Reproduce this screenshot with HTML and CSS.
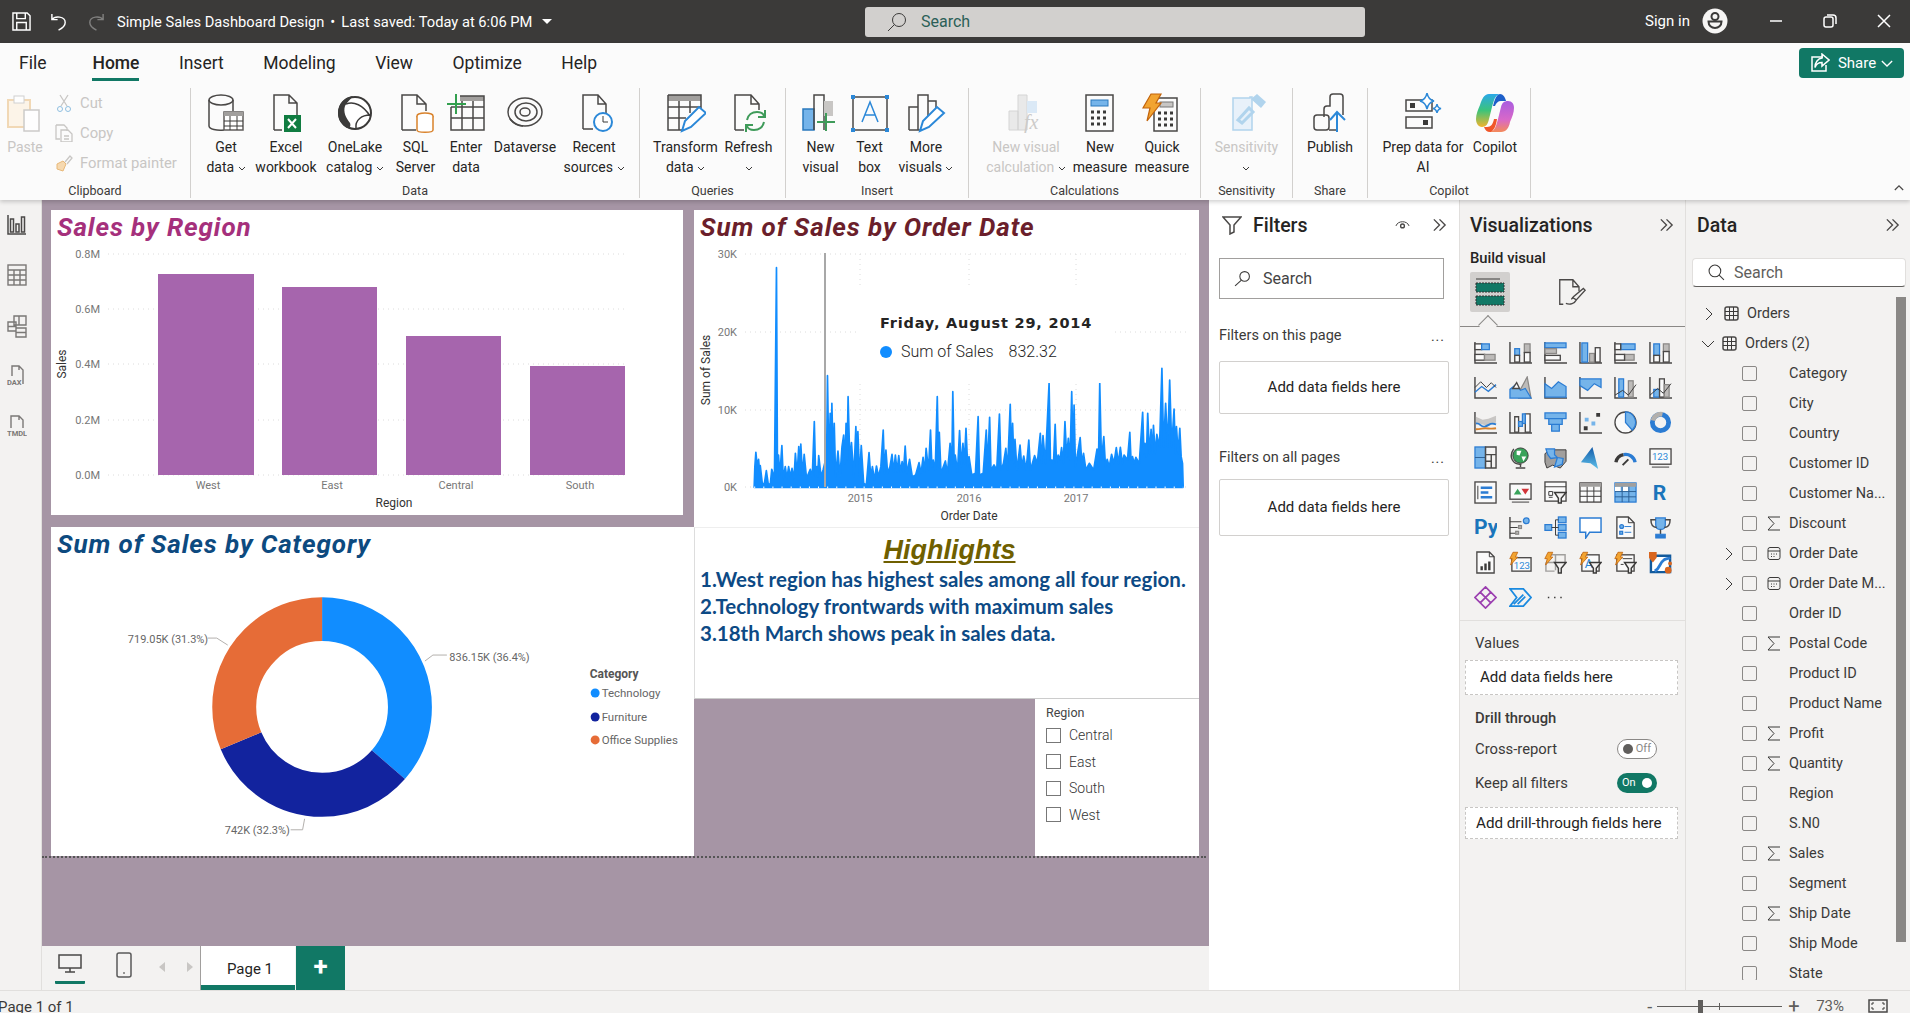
FILE: index.html
```html
<!DOCTYPE html>
<html lang="en">

<head>
    <meta charset="UTF-8">
    <title>Simple Sales Dashboard Design</title>
    <link rel="stylesheet" href="styles.css">
</head>

<body>
    <svg class="defs" width="0" height="0">
        <symbol id="i-sigma" viewBox="0 0 14 15"><path class="k" d="M13 1H1l6 6.500L1 14h12"/></symbol>
        <symbol id="i-cal" viewBox="0 0 14 14"><rect class="k" x="1" y="1" width="12" height="12" rx="2"/><path class="k" d="M1 4.500h12M4 7.500h1M6.500 7.500h1M9 7.500h1M4 10h1M6.500 10h1"/></symbol>
        <symbol id="i-right" viewBox="0 0 8 14"><path class="k" d="M1 1l6 6-6 6"/></symbol>
        <symbol id="i-down" viewBox="0 0 14 8"><path class="k" d="M1 1l6 6 6-6"/></symbol>
        <symbol id="i-table" viewBox="0 0 15 15"><rect class="k2" x="1" y="1" width="13" height="13" rx="2"/><path class="k" d="M5.500 1v13M9.500 1v13M1 5.500h13M1 9.500h13"/></symbol>
        <symbol id="i-dbl" viewBox="0 0 16 14"><path class="k2" d="M2 1l6 6-6 6M8 1l6 6-6 6"/></symbol>
        <symbol id="i-caret" viewBox="0 0 8 5"><path class="k" d="M1 1l3 3 3-3"/></symbol>
        <symbol id="i-bolt" viewBox="0 0 12 18"><path fill="#f2a431" stroke="#c2630b" d="M5 1h6L8 7h3L2 17l2-8H1z"/></symbol>
    </svg>

    <header class="titlebar">
        <div class="tb-left">
            <svg class="tb-icon" viewBox="0 0 20 20"><path class="wh" d="M1 1h15l3 3v15H1zM5 1v6h9V1M5 19v-8h10v8"/></svg>
            <svg class="tb-icon undo" viewBox="0 0 20 20"><path class="wh" d="M2 2v6h6M2 8c3-4 14-4 14 3 0 3-3 6-7 8"/></svg>
            <svg class="tb-icon dim" viewBox="0 0 20 20"><path class="wh" d="M18 2v6h-6M18 8c-3-4-14-4-14 3 0 3 3 6 7 8"/></svg>
            <span class="tb-title">Simple Sales Dashboard Design<span class="tb-dot">•</span>Last saved: Today at 6:06 PM</span>
            <span class="tb-caret"></span>
        </div>
        <div class="tb-search">
            <svg class="tb-search-icon" viewBox="0 0 20 20"><circle class="k" cx="12" cy="8" r="6.500"/><path class="k" d="M7.500 12.500L1 19"/></svg>
            <span>Search</span>
        </div>
        <div class="tb-right">
            <span class="tb-sign">Sign in</span>
            <svg class="tb-avatar" viewBox="0 0 26 26"><circle cx="13" cy="13" r="12.500" fill="#f6f5f4"/><circle class="dk" cx="13" cy="8.500" r="3.500"/><path class="dk" d="M6.500 13.500h13c0 4-3 6.500-6.500 6.500s-6.500-2.500-6.500-6.500z"/></svg>
            <svg class="tb-win" viewBox="0 0 14 14"><path class="wh" d="M1 7h12"/></svg>
            <svg class="tb-win" viewBox="0 0 14 14"><rect class="wh" x="1" y="3" width="9" height="10" rx="2"/><path class="wh" d="M4 1h6c2 0 3 1 3 3v6"/></svg>
            <svg class="tb-win" viewBox="0 0 14 14"><path class="wh" d="M1 1l12 12M13 1L1 13"/></svg>
        </div>
    </header>

    <section class="ribbon">
        <nav class="tabs">
            <span class="tab first">File</span>
            <span class="tab active">Home</span>
            <span class="tab">Insert</span>
            <span class="tab">Modeling</span>
            <span class="tab">View</span>
            <span class="tab">Optimize</span>
            <span class="tab">Help</span>
            <button class="share">
                <svg class="share-icon" viewBox="0 0 20 20"><path class="wh" d="M13 4H2v14h14v-6"/><path class="wh" d="M12 1l7 6-7 6V9.500c-4 0-6 2-7 5 0-5 3-9 7-9.500z"/></svg>
                Share
                <svg class="share-caret" viewBox="0 0 14 8"><path class="wh" d="M1 1l6 6 6-6"/></svg>
            </button>
        </nav>
        <div class="groups">
            <div class="rg g-clip">
                <div class="btns clip">
                    <div class="rb off w50">
                        <svg class="ri" viewBox="0 0 40 40"><path fill="#fdf4e6" stroke="#f0d5ae" stroke-width="2" d="M3 7h22v27H3z"/><rect x="9" y="3" width="10" height="7" fill="#fff" stroke="#ccc"/><rect x="19" y="17" width="15" height="21" fill="#fff" stroke="#c8c6c4" stroke-width="1.500"/></svg>
                        <span>Paste</span>
                    </div>
                    <div class="clip-list">
                        <div class="clip-item"><svg viewBox="0 0 18 18"><path class="ds" d="M5 1l7 11M13 1L6 12"/><circle cx="5" cy="15" r="2.500" fill="none" stroke="#8fbfe0"/><circle cx="13" cy="15" r="2.500" fill="none" stroke="#8fbfe0"/></svg>Cut</div>
                        <div class="clip-item"><svg viewBox="0 0 18 18"><path class="ds" d="M1 1h8l3 3v3M1 1v14h4"/><path class="ds" d="M6 6h7l4 4v8H6z"/><path class="ds" d="M9 12h5M9 15h5"/></svg>Copy</div>
                        <div class="clip-item"><svg viewBox="0 0 18 18"><path fill="#f6d9b0" stroke="#e8b878" d="M2 10l6-3 3 3-3 7-6-2z"/><path class="ds" d="M10 8l5-6 2 2-5 6"/></svg>Format painter</div>
                    </div>
                </div>
                <div class="rg-label">Clipboard</div>
            </div>

            <div class="rg g-data">
                <div class="btns start">
                    <div class="rb w58">
                        <svg class="ri" viewBox="0 0 40 40"><ellipse class="k2" cx="15" cy="7" rx="12" ry="5"/><path class="k2" d="M3 7v26c0 3 8 5 15 4M27 7v11"/><rect fill="#fff" stroke="#605e5c" stroke-width="1.500" x="18" y="19" width="19" height="18"/><path fill="#a19f9d" d="M18 19h19v4H18z"/><path class="k" d="M24 23v14M31 23v14M18 28h19M18 33h19"/></svg>
                        <span>Get<br>data <svg class="cv"><use href="#i-caret"/></svg></span>
                    </div>
                    <div class="rb w62">
                        <svg class="ri" viewBox="0 0 40 40"><path class="k2" d="M8 37V2h15l8 8v12M23 2v8h8M8 37h8"/><rect x="18" y="22" width="17" height="17" fill="#107c41"/><path stroke="#fff" stroke-width="2" d="M22 26l8 9M30 26l-8 9"/></svg>
                        <span>Excel<br>workbook</span>
                    </div>
                    <div class="rb w76">
                        <svg class="ri" viewBox="0 0 40 40"><circle fill="#fff" stroke="#3b3a39" stroke-width="2" cx="20" cy="20" r="16"/><path fill="#3b3a39" d="M18 3c-9 1-15 8-15 17 0 7 4 12 9 15 3 0 4-2 3-5-4-5-7-11-5-17 2-4 5-6 8-10z"/><path fill="none" stroke="#3b3a39" stroke-width="1.500" d="M11 11c8-3 17 1 24 12M21 35c-1-8 6-13 14-13"/></svg>
                        <span>OneLake<br>catalog <svg class="cv"><use href="#i-caret"/></svg></span>
                    </div>
                    <div class="rb w45">
                        <svg class="ri" viewBox="0 0 40 40"><path class="k2" d="M6 37V2h15l9 9v7M21 2v9h9M6 37h14"/><ellipse fill="#fff" stroke="#d9822b" stroke-width="1.500" cx="29" cy="23" rx="8" ry="3"/><path fill="#fff" stroke="#d9822b" stroke-width="1.500" d="M21 23v14c0 3 16 3 16 0V23"/></svg>
                        <span>SQL<br>Server</span>
                    </div>
                    <div class="rb w56">
                        <svg class="ri" viewBox="0 0 40 40"><path fill="#a19f9d" d="M14 3h24v5H14z"/><path class="k2" d="M5 14v23h33V3H14M5 25h33M5 14h33M16 8v29M27 8v29"/><path stroke="#33a04f" stroke-width="2" d="M10 1v20M1 11h19"/></svg>
                        <span>Enter<br>data</span>
                    </div>
                    <div class="rb w62">
                        <svg class="ri" viewBox="0 0 40 40"><ellipse class="k2" cx="20" cy="19" rx="17" ry="14"/><ellipse class="k2" cx="21" cy="19" rx="11" ry="9"/><ellipse class="k2" cx="20" cy="19" rx="5" ry="4"/><path class="k2" d="M5 26c4 5 9 7 13 7"/></svg>
                        <span>Dataverse</span>
                    </div>
                    <div class="rb w76">
                        <svg class="ri" viewBox="0 0 40 40"><path class="k2" d="M9 36V2h15l8 9v9M24 2v9h8M9 36h10"/><circle fill="#fff" stroke="#2b88d8" stroke-width="2" cx="29" cy="29" r="9"/><path class="k" d="M29 23v6h5"/></svg>
                        <span>Recent<br>sources <svg class="cv"><use href="#i-caret"/></svg></span>
                    </div>
                </div>
                <div class="rg-label">Data</div>
            </div>

            <div class="rg g-query">
                <div class="btns start">
                    <div class="rb w69">
                        <svg class="ri" viewBox="0 0 40 40"><path fill="#a19f9d" d="M2 2h33v6H2z"/><path class="k2" d="M2 2h33v19M2 2v35h14M2 14h33M2 25h18M13 8v29M24 8v12"/><path fill="#fff" stroke="#2b88d8" stroke-width="2" d="M16 38l3-10 14-14 7 6-15 14z"/></svg>
                        <span>Transform<br>data <svg class="cv"><use href="#i-caret"/></svg></span>
                    </div>
                    <div class="rb w57">
                        <svg class="ri" viewBox="0 0 40 40"><path class="k2" d="M6 37V2h16l8 9v6M22 2v9h8M6 37h9"/><path fill="none" stroke="#3f9b5a" stroke-width="2" d="M18 27c1-5 5-8 10-8 3 0 6 1 7 4M35 29c-1 5-5 8-10 8-3 0-6-1-7-4M36 17v7h-7M17 39v-7h7"/></svg>
                        <span>Refresh<br><svg class="cv"><use href="#i-caret"/></svg></span>
                    </div>
                </div>
                <div class="rg-label">Queries</div>
            </div>

            <div class="rg g-insert">
                <div class="btns">
                    <div class="rb w48">
                        <svg class="ri" viewBox="0 0 40 40"><rect x="2" y="16" width="11" height="21" fill="#75b4ea" stroke="#2b79bd" stroke-width="1.500"/><path class="k2" d="M13 37V2h10v35"/><path fill="#c8c6c4" d="M23 8h9v15h-9z"/><path stroke="#3f9b5a" stroke-width="2" d="M25 20v18M16 29h18"/></svg>
                        <span>New<br>visual</span>
                    </div>
                    <div class="rb w50">
                        <svg class="ri" viewBox="0 0 40 40"><rect class="k2" x="3" y="4" width="34" height="33"/><path fill="none" stroke="#2b88d8" stroke-width="1.500" d="M12 29l8-20 8 20M15 22h10"/><path fill="#2b88d8" d="M1 2h4v4H1zM35 2h4v4h-4zM1 35h4v4H1zM35 35h4v4h-4z"/></svg>
                        <span>Text<br>box</span>
                    </div>
                    <div class="rb w63">
                        <svg class="ri" viewBox="0 0 40 40"><path class="k2" d="M3 37V14h9M12 37V2h10v22M22 8h8v7M3 37h13"/><path fill="#fff" stroke="#2b88d8" stroke-width="2" d="M14 38l3-10 14-14 7 6-15 14z"/></svg>
                        <span>More<br>visuals <svg class="cv"><use href="#i-caret"/></svg></span>
                    </div>
                </div>
                <div class="rg-label">Insert</div>
            </div>

            <div class="rg g-calc">
                <div class="btns start">
                    <div class="rb off w88">
                        <svg class="ri" viewBox="0 0 40 40"><path fill="#e8e8e8" stroke="#d0d0d0" d="M3 18h9v19H3zM12 2h9v35h-9z"/><path fill="#d8e8f6" d="M21 8h10v12H21z"/><text class="fx" x="18" y="36">fx</text></svg>
                        <span>New visual<br>calculation <svg class="cv"><use href="#i-caret"/></svg></span>
                    </div>
                    <div class="rb w60">
                        <svg class="ri" viewBox="0 0 40 40"><rect class="k2" x="6" y="2" width="27" height="36"/><rect x="11" y="7" width="17" height="6" fill="#75b4ea" stroke="#2b79bd"/><path stroke="#3b3a39" stroke-width="3" stroke-dasharray="3 3" d="M11 19h18M11 25h18M11 31h18"/></svg>
                        <span>New<br>measure</span>
                    </div>
                    <div class="rb w64">
                        <svg class="ri" viewBox="0 0 40 40"><rect class="k2" x="12" y="5" width="23" height="33"/><rect x="18" y="9" width="13" height="5" fill="#c8c6c4" stroke="#777"/><path stroke="#3b3a39" stroke-width="3" stroke-dasharray="3 3" d="M16 20h16M16 26h16M16 32h16"/><path fill="#f2a431" stroke="#c2630b" stroke-width="1.200" d="M9 1h10l-5 9h5L5 28l3-13H1z"/></svg>
                        <span>Quick<br>measure</span>
                    </div>
                </div>
                <div class="rg-label">Calculations</div>
            </div>

            <div class="rg g-sens">
                <div class="btns">
                    <div class="rb off w92">
                        <svg class="ri" viewBox="0 0 40 40"><path fill="#e6f1fa" stroke="#a9d0ec" stroke-width="1.500" d="M6 5h17v-1h2v33H6z"/><path fill="none" stroke="#a9d0ec" stroke-width="3" d="M11 27l11-12 4 4-11 11z"/><path fill="#a9d0ec" d="M24 6l6-5 9 8-5 6z"/></svg>
                        <span>Sensitivity<br><svg class="cv"><use href="#i-caret"/></svg></span>
                    </div>
                </div>
                <div class="rg-label">Sensitivity</div>
            </div>

            <div class="rg g-share">
                <div class="btns">
                    <div class="rb w75">
                        <svg class="ri" viewBox="0 0 40 40"><path class="k2" d="M14 24v-8c0-2 1-3 3-3h3V4c0-2 1-3 3-3h7c2 0 3 1 3 3v18"/><rect class="k2" x="4" y="22" width="15" height="15" rx="3"/><path class="k2" d="M19 37h8"/><path fill="none" stroke="#2b88d8" stroke-width="2" d="M27 39V19M20 27l7-8 8 8"/></svg>
                        <span>Publish</span>
                    </div>
                </div>
                <div class="rg-label">Share</div>
            </div>

            <div class="rg g-copilot">
                <div class="btns">
                    <div class="rb w82">
                        <svg class="ri" viewBox="0 0 40 40"><rect class="k2" x="3" y="7" width="26" height="11"/><rect x="7" y="10" width="5" height="5" fill="#3b3a39"/><rect class="k2" x="3" y="24" width="26" height="11"/><rect x="20" y="27" width="5" height="5" fill="#3b3a39"/><path fill="#fff" stroke="#2b88d8" stroke-width="1.500" d="M24 0c1 5 3 7 7 8-4 1-6 3-7 8-1-5-3-7-7-8 4-1 6-3 7-8z"/><path fill="#fff" stroke="#2b88d8" stroke-width="1.500" d="M34 11c.5 3 1.500 4 4 4.500-2.500.5-3.500 1.500-4 4.500-.5-3-1.500-4-4-4.500 2.500-.5 3.500-1.500 4-4.500z"/></svg>
                        <span>Prep data for<br>AI</span>
                    </div>
                    <div class="rb w62">
                        <svg class="ri" viewBox="0 0 40 40">
                            <defs>
                                <linearGradient id="cp1" x1="0" y1="0" x2="0" y2="1"><stop offset="0" stop-color="#2aa8e8"/><stop offset=".5" stop-color="#3cc47a"/><stop offset="1" stop-color="#f2b32c"/></linearGradient>
                                <linearGradient id="cp2" x1="0" y1="0" x2="0" y2="1"><stop offset="0" stop-color="#a95de0"/><stop offset=".6" stop-color="#d868c8"/><stop offset="1" stop-color="#f48a5a"/></linearGradient>
                            </defs>
                            <path fill="url(#cp1)" d="M14 1h11c-5 1-6 6-8 13l-3 12c-1 5-3 8-7 8-4 0-6-4-6-8 0-5 2-9 4-14C7 6 9 1 14 1z"/>
                            <path fill="url(#cp2)" d="M26 39H15c5-1 6-6 8-13l3-12c1-4 3-6 7-6 4 0 6 3 6 7 0 5-2 9-4 14-1 6-4 10-9 10z"/>
                            <path fill="#1d5fc9" d="M14 1h11c3 0 5 3 6 7h-5c-3 0-5 2-6 5h-2c2-7 3-11 7-12z"/>
                            <path fill="#f0562a" d="M26 39H15c-3 0-5-2-6-5h3c4 0 6-3 7-8h3c-1 7-3 11-6 13z"/>
                        </svg>
                        <span>Copilot</span>
                    </div>
                </div>
                <div class="rg-label">Copilot</div>
            </div>
            <svg class="collapse" viewBox="0 0 12 8"><path class="k2" d="M1 7l5-5 5 5"/></svg>
        </div>
    </section>

    <main class="workspace">
        <aside class="rail">
            <svg class="rail-icon" viewBox="0 0 20 22"><path class="k2" d="M1 1v19h18"/><path class="k2" d="M3.500 5h3v13h-3zM9 10h3v8H9zM14.500 3h3v15h-3z"/></svg>
            <svg class="rail-icon" viewBox="0 0 20 22"><rect class="g1" x="1" y="1" width="18" height="20"/><path class="g1" d="M1 6h18M1 11h18M1 16h18M7 6v15M13 6v15"/></svg>
            <svg class="rail-icon" viewBox="0 0 20 22"><path class="g1" d="M7 1h12v9H7zM12 1v9M1 7h8v9H1zM1 11.500h8M9 13h10v9H9zM9 17.500h10"/></svg>
            <svg class="rail-icon" viewBox="0 0 20 24"><path class="g1" d="M5 12V2h7l4 4v14M12 2v4"/><text class="rail-txt" x="0" y="21">DAX</text></svg>
            <svg class="rail-icon" viewBox="0 0 20 24"><path class="g1" d="M4 14V2h8l4 4v8M12 2v4"/><text class="rail-txt" x="0" y="22">TMDL</text></svg>
        </aside>

        <div class="center">
            <div class="canvas">
                <div class="page">
                    <section class="visual v-region">
                        <h2 class="v-title t-region">Sales by Region</h2>
                        <svg class="chart" viewBox="0 0 632 305">
                            <g class="grid">
                                <path d="M57 44h520M57 99h520M57 154h520M57 210h520M57 265h520"/>
                            </g>
                            <g class="ax">
                                <text x="49" y="48" text-anchor="end">0.8M</text>
                                <text x="49" y="103" text-anchor="end">0.6M</text>
                                <text x="49" y="158" text-anchor="end">0.4M</text>
                                <text x="49" y="214" text-anchor="end">0.2M</text>
                                <text x="49" y="269" text-anchor="end">0.0M</text>
                                <text x="157" y="279" text-anchor="middle">West</text>
                                <text x="281" y="279" text-anchor="middle">East</text>
                                <text x="405" y="279" text-anchor="middle">Central</text>
                                <text x="529" y="279" text-anchor="middle">South</text>
                            </g>
                            <g fill="#a665ad">
                                <rect x="107" y="64" width="96" height="201"/>
                                <rect x="231" y="77" width="95" height="188"/>
                                <rect x="355" y="126" width="95" height="139"/>
                                <rect x="479" y="156" width="95" height="109"/>
                            </g>
                            <text class="ax-title" x="343" y="297" text-anchor="middle">Region</text>
                            <text class="ax-title" transform="translate(15 154) rotate(-90)" text-anchor="middle">Sales</text>
                        </svg>
                    </section>

                    <section class="visual v-date">
                        <h2 class="v-title t-date">Sum of Sales by Order Date</h2>
                        <svg class="chart" viewBox="0 0 505 317">
                            <g class="grid">
                                <path d="M51 44h444M51 122h444M51 200h444M51 277h444M166 44v233M275 44v233M382 44v233"/>
                            </g>
                            <g class="ax">
                                <text x="43" y="48" text-anchor="end">30K</text>
                                <text x="43" y="126" text-anchor="end">20K</text>
                                <text x="43" y="204" text-anchor="end">10K</text>
                                <text x="43" y="281" text-anchor="end">0K</text>
                                <text x="166" y="292" text-anchor="middle">2015</text>
                                <text x="275" y="292" text-anchor="middle">2016</text>
                                <text x="382" y="292" text-anchor="middle">2017</text>
                            </g>
                            <text class="ax-title" x="275" y="310" text-anchor="middle">Order Date</text>
                            <text class="ax-title" transform="translate(16 160) rotate(-90)" text-anchor="middle">Sum of Sales</text>
                            <g transform="translate(-4 -10) scale(.3378 .3333)">
                                <path class="spikes" d="M190,862 L192,800 L195,757 L199,800 L203,778 L206,815 L208,797 L214,850 L220,852 L226,812 L232,855 L238,850 L242,808 L250,835 L256,203 L259,830 L262,765 L266,825 L272,737 L276,835 L282,800 L287,835 L292,800 L297,830 L302,805 L308,835 L312,760 L317,825 L322,740 L325,825 L328,732 L333,825 L338,763 L345,835 L356,808 L362,830 L368,665 L372,830 L376,800 L378,830 L381,767 L388,830 L394,810 L400,785 L404,820 L407,527 L411,800 L415,640 L418,780 L420,610 L424,790 L427,670 L431,830 L438,753 L444,830 L450,740 L455,705 L459,790 L462,670 L465,780 L468,590 L473,780 L478,728 L485,830 L491,680 L494,770 L497,695 L502,830 L507,737 L514,850 L522,855 L530,758 L535,830 L540,800 L546,840 L552,798 L558,830 L565,800 L572,690 L576,820 L580,750 L585,820 L592,800 L598,763 L603,815 L608,765 L613,815 L618,767 L623,815 L628,785 L632,815 L637,738 L642,820 L650,778 L658,830 L668,825 L678,788 L684,820 L690,772 L695,815 L699,745 L706,810 L712,690 L716,800 L720,780 L726,810 L732,590 L736,800 L738,697 L743,820 L756,783 L762,820 L770,730 L775,800 L778,575 L782,790 L785,765 L792,815 L798,692 L803,800 L808,730 L812,790 L817,685 L822,800 L826,770 L834,825 L845,820 L853,650 L857,825 L868,820 L877,690 L881,800 L887,652 L891,810 L900,795 L908,810 L916,642 L921,810 L928,790 L935,745 L940,810 L948,613 L952,780 L955,670 L959,790 L962,718 L968,810 L977,735 L982,800 L988,768 L995,810 L1003,720 L1008,810 L1020,767 L1028,790 L1037,700 L1041,790 L1045,707 L1052,790 L1063,550 L1067,780 L1072,780 L1076,790 L1081,673 L1085,790 L1090,765 L1095,780 L1100,743 L1105,790 L1110,665 L1115,770 L1120,715 L1125,780 L1130,575 L1134,760 L1137,615 L1141,800 L1155,713 L1160,790 L1165,760 L1172,810 L1182,790 L1195,810 L1205,747 L1209,800 L1213,550 L1218,780 L1225,710 L1230,800 L1235,778 L1241,800 L1248,763 L1255,790 L1262,743 L1268,790 L1274,742 L1280,790 L1285,765 L1295,780 L1302,697 L1306,790 L1310,770 L1315,790 L1320,772 L1330,790 L1340,637 L1344,760 L1347,730 L1351,770 L1355,640 L1360,760 L1365,688 L1369,760 L1372,676 L1377,760 L1382,703 L1390,740 L1397,505 L1402,740 L1408,610 L1414,740 L1420,540 L1426,740 L1433,627 L1437,760 L1440,680 L1445,760 L1450,685 L1454,770 L1458,790 L1460,862 Z"/>
                                <path class="fringe" d="M190,862H1460"/>
                            </g>
                            <path class="cursor" d="M131 43v234"/>
                        </svg>
                        <div class="tip">
                            <div class="tip-date">Friday, August 29, 2014</div>
                            <div class="tip-row"><span class="tip-dot"></span>Sum of Sales<span class="tip-val">832.32</span></div>
                        </div>
                    </section>

                    <section class="visual v-cat">
                        <h2 class="v-title t-cat">Sum of Sales by Category</h2>
                        <svg class="chart" viewBox="0 0 644 329">
                            <g class="donut" transform="rotate(-90 271.500 180)">
                                <circle cx="271.500" cy="180" r="88" stroke="#118dff" pathLength="100" stroke-dasharray="36.400 100"/>
                                <circle cx="271.500" cy="180" r="88" stroke="#12239e" pathLength="100" stroke-dasharray="32.300 100" stroke-dashoffset="-36.400"/>
                                <circle cx="271.500" cy="180" r="88" stroke="#e66c37" pathLength="100" stroke-dasharray="31.300 100" stroke-dashoffset="-68.700"/>
                            </g>
                            <g class="leader">
                                <path d="M374.500 134l8-6h14M157 111h9l11 7M240 303h12l2-11"/>
                            </g>
                            <g class="ax lab">
                                <text x="399" y="134">836.15K (36.4%)</text>
                                <text x="77" y="116">719.05K (31.3%)</text>
                                <text x="174" y="307">742K (32.3%)</text>
                            </g>
                            <text class="lg-title" x="539.500" y="151">Category</text>
                            <g class="lg">
                                <circle cx="545" cy="166" r="4.500" fill="#118dff"/><text x="551.500" y="170">Technology</text>
                                <circle cx="545" cy="190" r="4.500" fill="#12239e"/><text x="551.500" y="194">Furniture</text>
                                <circle cx="545" cy="213" r="4.500" fill="#e66c37"/><text x="551.500" y="217">Office Supplies</text>
                            </g>
                        </svg>
                    </section>

                    <section class="visual v-high">
                        <h2 class="high-title">Highlights</h2>
                        <p class="high-line">1.West region has highest sales among all four region.</p>
                        <p class="high-line">2.Technology frontwards with maximum sales</p>
                        <p class="high-line">3.18th March shows peak in sales data.</p>
                    </section>

                    <section class="visual v-slicer">
                        <div class="sl-title">Region</div>
                        <label class="sl-row"><span class="sl-box"></span>Central</label>
                        <label class="sl-row"><span class="sl-box"></span>East</label>
                        <label class="sl-row"><span class="sl-box"></span>South</label>
                        <label class="sl-row"><span class="sl-box"></span>West</label>
                    </section>
                </div>
            </div>
            <div class="pagebar">
                <div class="pb-views">
                    <div class="pb-view current">
                        <svg viewBox="0 0 24 20"><rect class="k2" x="1" y="1" width="22" height="13"/><path class="k2" d="M12 14v4M7 18h10"/></svg>
                    </div>
                    <div class="pb-view">
                        <svg class="pb-phone" viewBox="0 0 16 26"><rect fill="none" stroke="#5a5a5a" stroke-width="1.500" x="1" y="1" width="14" height="24" rx="2"/><path class="k" d="M7 21h2"/></svg>
                    </div>
                    <span class="pb-arrow left"></span>
                    <span class="pb-arrow right"></span>
                </div>
                <div class="pb-tab">Page 1</div>
                <div class="pb-add">+</div>
            </div>
        </div>

        <aside class="filters">
            <div class="f-head">
                <svg class="f-funnel" viewBox="0 0 20 20"><path class="k2" d="M1 2h18l-7 8v7l-4 2v-9z"/></svg>
                <span class="pane-title">Filters</span>
                <svg class="f-eye" viewBox="0 0 16 12"><path class="k" d="M1 7c2-6 12-6 14 0"/><circle class="k2" cx="8" cy="7" r="2"/></svg>
                <svg class="f-dbl"><use href="#i-dbl"/></svg>
            </div>
            <div class="f-search">
                <svg viewBox="0 0 16 16"><circle class="k" cx="10" cy="6" r="4.500"/><path class="k" d="M7 9.500L1 15"/></svg>
                Search
            </div>
            <div class="f-sub"><span>Filters on this page</span><span class="dots">...</span></div>
            <div class="f-drop">Add data fields here</div>
            <div class="f-sub"><span>Filters on all pages</span><span class="dots">...</span></div>
            <div class="f-drop second">Add data fields here</div>
        </aside>

        <aside class="viz">
            <div class="pane-head">
                <span class="pane-title">Visualizations</span>
                <svg class="f-dbl"><use href="#i-dbl"/></svg>
            </div>
            <div class="viz-build">Build visual</div>
            <div class="viz-modes">
                <div class="mode on">
                    <svg viewBox="0 0 30 28"><path class="k" d="M1 1h24"/><rect x="1" y="5" width="28" height="9" fill="#117865" stroke="#333" stroke-dasharray="2 1"/><rect x="1" y="18" width="28" height="9" fill="#117865" stroke="#333" stroke-dasharray="2 1"/></svg>
                </div>
                <div class="mode">
                    <svg viewBox="0 0 32 32"><path class="k2" d="M6 30H2V2h15l7 8v5M17 2v8h7"/><path class="k2" d="M9 29c5 2 10 0 12-4l10-11-2-2-11 9c-1 2-2 3-3 3M16 22l5 3"/></svg>
                </div>
            </div>
            <div class="viz-line"><span class="notch"></span></div>
            <div class="viz-grid">
                <svg viewBox="0 0 24 24"><path class="k2" d="M1 1v22h23"/><rect class="w1" x="1" y="3" width="7" height="6"/><rect class="b" x="8" y="3" width="8" height="6"/><rect class="w1" x="1" y="14" width="10" height="6"/><rect class="g" x="11" y="14" width="11" height="6"/></svg>
                <svg viewBox="0 0 24 24"><path class="k2" d="M1 1v22h23"/><rect class="b" x="6" y="8" width="5" height="7"/><rect class="w1" x="6" y="15" width="5" height="7"/><rect class="g" x="16" y="3" width="6" height="9"/><rect class="w1" x="16" y="12" width="6" height="10"/></svg>
                <svg viewBox="0 0 24 24"><path class="k2" d="M1 1v22h23"/><rect class="b" x="1" y="2" width="22" height="5"/><rect class="g" x="1" y="8" width="12" height="5"/><rect class="w1" x="1" y="15" width="16" height="5"/></svg>
                <svg viewBox="0 0 24 24"><path class="k2" d="M1 1v22h23"/><rect class="b" x="3" y="2" width="6" height="20"/><rect class="g" x="11" y="13" width="5" height="9"/><rect class="w1" x="17" y="7" width="5" height="15"/></svg>
                <svg viewBox="0 0 24 24"><path class="k2" d="M1 1v22h23"/><rect class="b" x="7" y="3" width="15" height="6"/><rect class="w1" x="1" y="3" width="6" height="6"/><rect class="g" x="11" y="14" width="10" height="6"/><rect class="w1" x="1" y="14" width="10" height="6"/></svg>
                <svg viewBox="0 0 24 24"><path class="k2" d="M1 1v22h23"/><rect class="b" x="5" y="3" width="6" height="12"/><rect class="w1" x="5" y="15" width="6" height="7"/><rect class="g" x="15" y="3" width="6" height="8"/><rect class="w1" x="15" y="11" width="6" height="11"/></svg>

                <svg viewBox="0 0 24 24"><path class="k2" d="M1 1v22h23"/><path class="s-blue" d="M1 17l7-6 7 5 8-7"/><path class="k" d="M1 12l6-6 6 6 5-5 5 5"/></svg>
                <svg viewBox="0 0 24 24"><path class="g" d="M12 14l7-13 4 22H10z"/><path class="b" d="M1 23V14l6-5 5 6 5-2 6 10z"/><path class="w1" d="M4 13l4-6 3 6z"/></svg>
                <svg viewBox="0 0 24 24"><path class="k2" d="M1 1v22h23"/><path class="b" d="M1 8l7 5 7-7 8 5v11H1z"/></svg>
                <svg viewBox="0 0 24 24"><path class="k2" d="M1 1v22h23"/><path class="b" d="M1 3h22v9l-7-4-7 7-8-5z"/></svg>
                <svg viewBox="0 0 24 24"><path class="k2" d="M1 1v22h23"/><rect class="b" x="5" y="3" width="5" height="19"/><rect class="g" x="15" y="5" width="5" height="17"/><path class="k" d="M1 20l8-5 6 5 8-11"/></svg>
                <svg viewBox="0 0 24 24"><path class="k2" d="M1 1v22h23"/><rect class="b" x="5" y="14" width="6" height="8"/><rect class="w1" x="11" y="3" width="5" height="19"/><rect class="g" x="16" y="9" width="5" height="13"/><path class="k" d="M1 20l8-7 6 5 8-10"/></svg>

                <svg viewBox="0 0 24 24"><path class="k2" d="M1 1v22h23"/><path fill="#c8c6c4" d="M2 6l7 3 6-1 8-3v7l-8 4-6-2-7-2z"/><path fill="none" stroke="#2b7cd3" stroke-width="2" d="M2 13c5-1 5 5 10 3s5-4 11-2"/><path fill="none" stroke="#d9822b" stroke-width="2" d="M2 19c5 0 7-1 10-1s6 1 11 0"/></svg>
                <svg viewBox="0 0 24 24"><path class="k2" d="M1 1v22h23"/><path class="w1" d="M6 6h4v16H6zM17 3h5v19h-5z"/><rect class="b" x="10" y="11" width="4" height="5"/><rect class="b" x="14" y="3" width="3" height="10"/></svg>
                <svg viewBox="0 0 24 24"><path class="b" d="M1 2h22v6H1zM5 8h14v6H5zM8 14h8v7H8z"/></svg>
                <svg viewBox="0 0 24 24"><path class="k2" d="M1 1v22h23"/><path fill="#75b4ea" d="M6 7h4v4H6zM13 11h4v4h-4z"/><path fill="#3b3a39" d="M5 16h4v4H5zM18 2h4v4h-4z"/></svg>
                <svg viewBox="0 0 24 24"><circle class="w1" cx="12" cy="12" r="11"/><path class="b" d="M12 1a11 11 0 0 1 7 19L12 12z"/></svg>
                <svg viewBox="0 0 24 24"><circle fill="none" stroke="#2b7cd3" stroke-width="5" cx="12" cy="12" r="8.500"/><path fill="none" stroke="#b3b0ad" stroke-width="5" d="M4 10a8.500 8.500 0 0 1 10-6.500"/></svg>

                <svg viewBox="0 0 24 24"><rect class="b" x="1" y="1" width="11" height="22"/><path class="k3" d="M1 12h11"/><path class="k2" d="M12 1h11v22H12zM12 9h11M18 9v14M12 16h6"/></svg>
                <svg viewBox="0 0 24 24"><circle fill="#38a35a" stroke="#3b3a39" cx="12" cy="10" r="8"/><path fill="#fff" d="M8 5h5l-2 5-3-1zM13 11h5l-3 5z"/><path class="k2" d="M5 3c-6 8-1 17 8 16M12 19v3M7 23h10"/></svg>
                <svg viewBox="0 0 24 24"><path fill="#a19f9d" stroke="#3b3a39" d="M1 8l6-4h16v12l-6 7-8-3-6 3-2-6z"/><path class="b" d="M2 3h9v6l3 3-7 1-3-4zM14 12l6 1-1 6-8 3z"/></svg>
                <svg viewBox="0 0 24 24"><defs><linearGradient id="az" x1="0" y1="0" x2="0" y2="1"><stop offset="0" stop-color="#125aa8"/><stop offset="1" stop-color="#5ec0ea"/></linearGradient></defs><path fill="url(#az)" d="M14 1l6 23-8-6-10-1z"/></svg>
                <svg viewBox="0 0 24 24"><path fill="none" stroke="#3b3a39" stroke-width="3.500" d="M2 17a10 10 0 0 1 8-8"/><path fill="none" stroke="#2b7cd3" stroke-width="3.500" d="M10 9a10 10 0 0 1 12 8"/><path stroke="#3b3a39" stroke-width="2" d="M9 20l6-6"/></svg>
                <svg viewBox="0 0 24 24"><rect class="w1" x="1" y="3" width="22" height="16"/><text class="n123" x="3" y="15">123</text><path class="k" d="M3 22h18"/></svg>

                <svg viewBox="0 0 24 24"><rect class="w1" x="1" y="1" width="22" height="22"/><path stroke="#2b7cd3" stroke-width="2.500" d="M7 7h12M7 12h8M7 17h12"/><path class="k" d="M4 5v14"/></svg>
                <svg viewBox="0 0 24 24"><rect class="w1" x="1" y="3" width="22" height="16"/><path fill="#38a35a" d="M5 14l4-6 4 6z"/><path fill="#d13438" d="M13 8h8l-4 6z"/><path class="k" d="M3 22h18"/></svg>
                <svg viewBox="0 0 24 24"><rect class="w1" x="1" y="1" width="22" height="20"/><path class="k" d="M1 6h22M5 11h4v4H5zM5 17h4"/><path fill="#f3f2f1" stroke="#3b3a39" stroke-width="1.500" d="M11 12h12l-5 6v5h-3v-5z"/></svg>
                <svg viewBox="0 0 24 24"><rect class="w1" x="1" y="2" width="22" height="20"/><path fill="#a19f9d" d="M1 2h22v4H1z"/><path class="k" d="M1 10.500h22M1 16h22M8.500 6v16M15.500 6v16"/></svg>
                <svg viewBox="0 0 24 24"><rect class="b" x="1" y="2" width="22" height="20"/><path fill="#fff" d="M1 6h6v5H1zM9 6h6v5H9z"/><path fill="#a19f9d" d="M1 2h22v4H1z"/><path class="k3" d="M1 11h22M1 16.500h22M8.500 6v16M15.500 6v16"/></svg>
                <svg viewBox="0 0 24 24"><text class="rtxt" x="4" y="20">R</text></svg>

                <svg viewBox="0 0 24 24"><text class="pytxt" x="0" y="19">Py</text></svg>
                <svg viewBox="0 0 24 24"><path class="k2" d="M1 1v22h23"/><path class="k" d="M1 6h12M1 12h8M1 18h6"/><circle class="b" cx="18" cy="5" r="3"/><rect class="g" x="10" y="10" width="3" height="3"/><rect class="g" x="7" y="16" width="3" height="3"/></svg>
                <svg viewBox="0 0 24 24"><rect class="b" x="1" y="9" width="7" height="6"/><rect class="b" x="15" y="1" width="8" height="6"/><rect class="b" x="15" y="9" width="8" height="6"/><rect class="b" x="15" y="17" width="8" height="6"/><path class="k" d="M8 12h4M12 4v16M12 4h3M12 12h3M12 20h3"/></svg>
                <svg viewBox="0 0 24 24"><path fill="#fff" stroke="#2b7cd3" stroke-width="1.500" d="M1 2h22v15H11l-4 6v-6H1z"/></svg>
                <svg viewBox="0 0 24 24"><path class="w1" d="M3 1h12l6 6v16H3z"/><path class="k" d="M15 1v6h6"/><circle class="b" cx="8" cy="11" r="2"/><rect class="b" x="6" y="16" width="3" height="3"/><path stroke="#2b7cd3" d="M11 11h7M11 17h7"/></svg>
                <svg viewBox="0 0 24 24"><path class="b" d="M7 2h10v7c0 3-2 5-5 5s-5-2-5-5z"/><path class="k2" d="M7 4H2c0 5 2 8 6 8M17 4h5c0 5-2 8-6 8M12 14v5"/><rect fill="#2b7cd3" stroke="#2b7cd3" x="7" y="19" width="10" height="4"/></svg>

                <svg viewBox="0 0 24 24"><path class="w1" d="M3 1h13l5 5v17H3z"/><path class="k" d="M16 1v5h5"/><path stroke="#3b3a39" stroke-width="2.500" d="M8 20v-4M12 20v-7M16 20v-9"/></svg>
                <svg viewBox="0 0 24 24"><rect class="w1" x="3" y="7" width="20" height="14"/><text class="n123" x="5" y="19">123</text><use href="#i-bolt" x="0" y="0" width="10" height="16"/></svg>
                <svg viewBox="0 0 24 24"><path fill="none" stroke="#a19f9d" stroke-width="1.500" d="M4 4h18v8M12 4v16M2 12h10M2 12v9h9"/><path fill="#f3f2f1" stroke="#3b3a39" stroke-width="1.500" d="M11 12h12l-5 6v5h-3v-5z"/><use href="#i-bolt" x="0" y="0" width="10" height="16"/></svg>
                <svg viewBox="0 0 24 24"><rect class="w1" x="3" y="4" width="18" height="17"/><text class="atxt" x="6" y="18">A</text><path fill="#f3f2f1" stroke="#3b3a39" stroke-width="1.500" d="M11 12h12l-5 6v5h-3v-5z"/><use href="#i-bolt" x="0" y="0" width="10" height="16"/></svg>
                <svg viewBox="0 0 24 24"><rect class="w1" x="3" y="4" width="18" height="17"/><path class="k" d="M9 8h10M7 14h3"/><path fill="#f3f2f1" stroke="#3b3a39" stroke-width="1.500" d="M11 12h12l-5 6v5h-3v-5z"/><use href="#i-bolt" x="0" y="0" width="10" height="16"/></svg>
                <svg viewBox="0 0 24 24"><path fill="#fff" stroke="#125a9c" stroke-width="2.500" d="M2 5h20v17H2z"/><path fill="none" stroke="#2b7cd3" stroke-width="3" d="M6 21c6-3 4-8 10-12 2-1 4-1 6-2"/><path fill="#d9661f" d="M0 1h8v6l-4 5-4-5z"/><circle fill="#d9661f" cx="20" cy="20" r="3.500"/><circle fill="#d9661f" cx="22" cy="13" r="2"/></svg>

                <svg viewBox="0 0 24 24"><path fill="none" stroke="#9b3fb0" stroke-width="1.800" d="M12 1l5.500 5.500L12 12 6.500 6.500zM12 12l5.500 5.500L12 23l-5.500-5.500zM6.500 6.500L12 12l-5.500 5.500L1 12zM17.500 6.500L23 12l-5.500 5.500L12 12z"/></svg>
                <svg viewBox="0 0 24 24"><path fill="none" stroke="#1a8ae0" stroke-width="1.800" d="M1 3h14l8 9-8 9H1l7-9zM5 19l10-10M9 19l8-8"/></svg>
                <svg viewBox="0 0 24 24"><path stroke="#3b3a39" stroke-width="1.500" stroke-dasharray="1.500 5" d="M4 12h18"/></svg>
            </div>
            <div class="viz-sep"></div>
            <div class="v-label">Values</div>
            <div class="v-drop first">Add data fields here</div>
            <div class="v-head">Drill through</div>
            <div class="v-opt">Cross-report <span class="toggle off"><i></i>Off</span></div>
            <div class="v-opt">Keep all filters <span class="toggle on">On<i></i></span></div>
            <div class="v-drop">Add drill-through fields here</div>
        </aside>

        <aside class="data">
            <div class="pane-head">
                <span class="pane-title">Data</span>
                <svg class="f-dbl"><use href="#i-dbl"/></svg>
            </div>
            <div class="d-search">
                <svg viewBox="0 0 16 16"><circle class="k" cx="6.500" cy="6.500" r="5.500"/><path class="k" d="M10.500 10.500L15 15"/></svg>
                Search
            </div>
            <div class="d-body">
                <div class="tree">
                    <div class="t-head"><svg class="hc"><use href="#i-right"/></svg><svg class="ht"><use href="#i-table"/></svg>Orders</div>
                    <div class="t-head"><svg class="hc open"><use href="#i-down"/></svg><svg class="ht"><use href="#i-table"/></svg>Orders (2)</div>
                    <div class="t-row"><span></span><span class="cb"></span><span></span><span>Category</span></div>
                    <div class="t-row"><span></span><span class="cb"></span><span></span><span>City</span></div>
                    <div class="t-row"><span></span><span class="cb"></span><span></span><span>Country</span></div>
                    <div class="t-row"><span></span><span class="cb"></span><span></span><span>Customer ID</span></div>
                    <div class="t-row"><span></span><span class="cb"></span><span></span><span>Customer Na...</span></div>
                    <div class="t-row"><span></span><span class="cb"></span><svg class="ti"><use href="#i-sigma"/></svg><span>Discount</span></div>
                    <div class="t-row"><svg class="tc"><use href="#i-right"/></svg><span class="cb"></span><svg class="ti"><use href="#i-cal"/></svg><span>Order Date</span></div>
                    <div class="t-row"><svg class="tc"><use href="#i-right"/></svg><span class="cb"></span><svg class="ti"><use href="#i-cal"/></svg><span>Order Date M...</span></div>
                    <div class="t-row"><span></span><span class="cb"></span><span></span><span>Order ID</span></div>
                    <div class="t-row"><span></span><span class="cb"></span><svg class="ti"><use href="#i-sigma"/></svg><span>Postal Code</span></div>
                    <div class="t-row"><span></span><span class="cb"></span><span></span><span>Product ID</span></div>
                    <div class="t-row"><span></span><span class="cb"></span><span></span><span>Product Name</span></div>
                    <div class="t-row"><span></span><span class="cb"></span><svg class="ti"><use href="#i-sigma"/></svg><span>Profit</span></div>
                    <div class="t-row"><span></span><span class="cb"></span><svg class="ti"><use href="#i-sigma"/></svg><span>Quantity</span></div>
                    <div class="t-row"><span></span><span class="cb"></span><span></span><span>Region</span></div>
                    <div class="t-row"><span></span><span class="cb"></span><span></span><span>S.N0</span></div>
                    <div class="t-row"><span></span><span class="cb"></span><svg class="ti"><use href="#i-sigma"/></svg><span>Sales</span></div>
                    <div class="t-row"><span></span><span class="cb"></span><span></span><span>Segment</span></div>
                    <div class="t-row"><span></span><span class="cb"></span><svg class="ti"><use href="#i-sigma"/></svg><span>Ship Date</span></div>
                    <div class="t-row"><span></span><span class="cb"></span><span></span><span>Ship Mode</span></div>
                    <div class="t-row"><span></span><span class="cb"></span><span></span><span>State</span></div>
                </div>
                <div class="scroll"></div>
            </div>
        </aside>
    </main>

    <footer class="status">
        <span class="st-page">Page 1 of 1</span>
        <div class="zoom">
            <span class="z-minus">-</span>
            <div class="z-track"><i class="z-thumb"></i><i class="z-tick"></i></div>
            <span class="z-plus">+</span>
            <span class="z-val">73%</span>
            <svg class="z-fit" viewBox="0 0 20 14"><rect class="k2" x="1" y="1" width="18" height="12"/><path class="k" d="M4 6V4h2M14 4h2v2M16 8v2h-2M6 10H4V8"/></svg>
        </div>
    </footer>
</body>

</html>
```

FILE: styles.css
```css
* {
    box-sizing: border-box;
}

body {
    margin: 0;
    height: 100vh;
    overflow: hidden;
    display: flex;
    flex-direction: column;
    font-family: Roboto, "Noto Sans", sans-serif;
    font-size: 14px;
    color: #252423;
    background-color: #f3f2f1;
}

.defs {
    position: absolute;
}

/* shared svg strokes */
.k {
    fill: none;
    stroke: #3b3a39;
    stroke-width: 1;
}

.k2 {
    fill: none;
    stroke: #4a4847;
    stroke-width: 1.5;
}

.k3 {
    fill: none;
    stroke: #2b5f94;
    stroke-width: 1;
}

.wh {
    fill: none;
    stroke: #fff;
    stroke-width: 1.5;
}

.dk {
    fill: none;
    stroke: #3b3a39;
    stroke-width: 2;
}

.ds {
    fill: none;
    stroke: #c8c6c4;
    stroke-width: 1.3;
}

.g1 {
    fill: none;
    stroke: #7a7876;
    stroke-width: 1.4;
}

.b {
    fill: #75b4ea;
    stroke: #2b7cd3;
    stroke-width: 1.3;
}

.g {
    fill: #bdbbb9;
    stroke: #8a8886;
    stroke-width: 1.3;
}

.w1 {
    fill: #fafafa;
    stroke: #4a4847;
    stroke-width: 1.4;
}

.s-blue {
    fill: none;
    stroke: #2b7cd3;
    stroke-width: 1.4;
}

/* title bar */
.titlebar {
    height: 43px;
    flex: none;
    display: flex;
    align-items: center;
    background-color: #3b3a39;
    color: #fff;
}

.tb-left {
    width: 865px;
    flex: none;
    display: flex;
    align-items: center;
    padding-left: 12px;
}

.tb-icon {
    width: 19px;
    height: 19px;
    margin-right: 19px;
}

.tb-icon.undo {
    margin-right: 17px;
}

.tb-icon.dim {
    opacity: 0.35;
    margin-right: 12px;
}

.tb-title {
    font-size: 14.7px;
    white-space: nowrap;
}

.tb-dot {
    margin: 0 6px;
}

.tb-caret {
    margin-left: 10px;
    border-left: 5px solid transparent;
    border-right: 5px solid transparent;
    border-top: 5px solid #fff;
}

.tb-search {
    width: 500px;
    flex: none;
    height: 30px;
    display: flex;
    align-items: center;
    padding-left: 22px;
    background-color: #d2d0ce;
    border-radius: 3px;
    font-size: 16px;
    color: #2b5f57;
}

.tb-search-icon {
    width: 20px;
    height: 20px;
    margin-right: 14px;
}

.tb-right {
    flex: 1;
    display: flex;
    align-items: center;
    padding-left: 280px;
    margin-top: -1px;
}

.tb-sign {
    font-size: 15px;
    margin-right: 12px;
    white-space: nowrap;
}

.tb-avatar {
    width: 26px;
    height: 26px;
    flex: none;
    margin-right: 41px;
}

.tb-win {
    width: 14px;
    height: 14px;
    flex: none;
    margin-right: 40px;
}

/* ribbon */
.ribbon {
    height: 157px;
    flex: none;
    background-color: #fbfbfb;
    box-shadow: 0 2px 4px rgba(0, 0, 0, 0.18);
    position: relative;
    z-index: 2;
}

.tabs {
    height: 45px;
    display: flex;
    gap: 39.5px;
    padding-left: 19px;
    font-size: 17.5px;
}

.tab {
    height: 38px;
    line-height: 40px;
    color: #252423;
}

.tab.first {
    margin-right: 6.5px;
}

.tab.active {
    font-weight: 500;
    border-bottom: 3px solid #117865;
}

.share {
    margin: 5px 6px 0 auto;
    width: 105px;
    height: 30px;
    display: flex;
    align-items: center;
    justify-content: center;
    gap: 8px;
    border: none;
    border-radius: 4px;
    background-color: #117865;
    color: #fff;
    font-family: inherit;
    font-size: 15px;
}

.share-icon {
    width: 20px;
    height: 20px;
}

.share-caret {
    width: 12px;
    height: 7px;
    margin-left: -3px;
}

.groups {
    height: 110px;
    display: flex;
    position: relative;
}

.rg {
    display: flex;
    flex-direction: column;
    border-right: 1px solid #d2d0ce;
}

.g-clip { width: 191px; }
.g-data { width: 449px; }
.g-query { width: 146px; }
.g-insert { width: 183px; }
.g-calc { width: 232px; }
.g-sens { width: 92px; }
.g-share { width: 75px; }
.g-copilot { width: 163px; }

.btns {
    flex: 1;
    display: flex;
    justify-content: center;
}

.btns.clip {
    justify-content: flex-start;
}

.btns.start {
    justify-content: flex-start;
}

.g-data .btns { padding-left: 6px; }
.g-query .btns { padding-left: 11px; }
.g-calc .btns { padding-left: 13px; }
.g-copilot .btns { padding-left: 10px; }

.rg-label {
    height: 14px;
    line-height: 14px;
    text-align: center;
    font-size: 12.5px;
    color: #3b3a39;
}

.rb {
    display: flex;
    flex-direction: column;
    align-items: center;
    padding-top: 5px;
    text-align: center;
    line-height: 20px;
    color: #252423;
    white-space: nowrap;
}

.rb.off {
    color: #c8c6c4;
}

.rb.off .ri {
    opacity: 0.9;
}

.ri {
    width: 40px;
    height: 40px;
    margin-bottom: 4px;
    flex: none;
}

.cv {
    width: 8px;
    height: 5px;
    vertical-align: 1px;
}

.w45 { width: 45px; }
.w48 { width: 48px; }
.w50 { width: 50px; }
.w56 { width: 56px; }
.w57 { width: 57px; }
.w58 { width: 58px; }
.w60 { width: 60px; }
.w62 { width: 62px; }
.w63 { width: 63px; }
.w64 { width: 64px; }
.w69 { width: 69px; }
.w75 { width: 75px; }
.w76 { width: 76px; }
.w82 { width: 82px; }
.w88 { width: 88px; }
.w92 { width: 92px; }

.clip-list {
    margin-left: 5px;
}

.clip-item {
    height: 30px;
    display: flex;
    align-items: center;
    gap: 7px;
    font-size: 14.8px;
    color: #c8c6c4;
    white-space: nowrap;
}

.clip-item svg {
    width: 18px;
    height: 18px;
}

.fx {
    font-family: "Liberation Serif", serif;
    font-style: italic;
    font-size: 20px;
    fill: #c8c6c4;
}

.collapse {
    position: absolute;
    right: 6px;
    bottom: 7px;
    width: 10px;
    height: 7px;
}

/* main area */
.workspace {
    height: 790px;
    flex: none;
    display: flex;
}

.rail {
    width: 42px;
    flex: none;
    display: flex;
    flex-direction: column;
    align-items: center;
    gap: 26.3px;
    padding: 13px 8px 0 0;
    background-color: #f3f2f1;
    border-right: 1px solid #e1dfdd;
}

.rail-icon {
    width: 20px;
    height: 24px;
}

.rail-txt {
    font-size: 7.5px;
    fill: #7a7876;
    font-weight: 700;
}

.center {
    width: 1167px;
    flex: none;
    display: flex;
    flex-direction: column;
}

.canvas {
    height: 746px;
    background-color: #a695a5;
}

.page {
    width: 1164px;
    height: 658px;
    padding: 10px 0 0 9px;
    display: grid;
    grid-template-columns: 632px 11px 341px 164px;
    grid-template-rows: 305px 12px 172px 157px;
    border-bottom: 2px dotted #555;
}

.visual {
    position: relative;
    background-color: #fff;
    overflow: hidden;
    min-width: 0;
}

.v-region { grid-column: 1; grid-row: 1; }
.v-date { grid-column: 3 / 5; grid-row: 1 / 3; }
.v-cat { grid-column: 1 / 3; grid-row: 3 / 5; }
.v-high { grid-column: 3 / 5; grid-row: 3; border-bottom: 1px solid #ccc; border-top: 1px solid #eee; border-left: 1px solid #ddd; padding: 5px 0 0 5px; }
.v-slicer { grid-column: 4; grid-row: 4; padding: 6px 0 0 11px; }

.v-title {
    position: absolute;
    left: 6px;
    top: 1px;
    margin: 0;
    font-size: 26px;
    letter-spacing: 0.9px;
    line-height: 32px;
    font-weight: 700;
    font-style: italic;
    white-space: nowrap;
}

.t-region { color: #a5307c; }
.t-date { color: #6b1f2b; }
.t-cat { color: #0d4a7f; }

.chart {
    display: block;
    width: 100%;
    height: 100%;
}

.grid path {
    fill: none;
    stroke: #dcdcdc;
    stroke-width: 1;
    stroke-dasharray: 1 4;
}

.ax text {
    font-size: 11px;
    fill: #777;
}

.lab text {
    font-size: 11px;
    fill: #666;
}

.ax-title {
    font-size: 12px;
    fill: #333;
}

.spikes {
    fill: #118dff;
    stroke: #118dff;
    stroke-width: 5;
    stroke-linejoin: round;
}

.fringe {
    stroke: #fff;
    stroke-width: 5;
    stroke-dasharray: 3 24;
}

.cursor {
    stroke: #a8a8a8;
    stroke-width: 2;
}

.tip {
    position: absolute;
    left: 162px;
    top: 78px;
    width: 258px;
    height: 95px;
    padding: 27px 0 0 24px;
    background-color: #fff;
}

.tip-date {
    font-family: "DejaVu Sans", sans-serif;
    font-size: 14.5px;
    font-weight: 700;
    letter-spacing: 0.8px;
    white-space: nowrap;
}

.tip-row {
    display: flex;
    align-items: center;
    margin-top: 11px;
    font-size: 16px;
    font-weight: 300;
    white-space: nowrap;
}

.tip-dot {
    width: 12px;
    height: 12px;
    border-radius: 50%;
    margin-right: 9px;
    background-color: #118dff;
}

.tip-val {
    margin-left: 15px;
}

.donut circle {
    fill: none;
    stroke-width: 44;
}

.leader path {
    fill: none;
    stroke: #b3b0ad;
    stroke-width: 1;
}

.lg-title {
    font-size: 12px;
    font-weight: 700;
    fill: #555;
}

.lg text {
    font-size: 11.5px;
    fill: #666;
}

.high-title {
    margin: 0 0 -1px;
    text-align: center;
    font-family: "Liberation Sans", sans-serif;
    font-size: 27px;
    line-height: 34px;
    font-weight: 700;
    font-style: italic;
    text-decoration: underline;
    color: #6f5f00;
}

.high-line {
    margin: 0;
    font-family: Lato, sans-serif;
    font-size: 20.5px;
    line-height: 27px;
    font-weight: 700;
    color: #0d4a85;
    white-space: nowrap;
}

.sl-title {
    font-size: 12.5px;
    color: #444;
    margin-bottom: 2px;
}

.sl-row {
    height: 26.5px;
    display: flex;
    align-items: center;
    gap: 8px;
    font-size: 14px;
    font-weight: 300;
    color: #333;
}

.sl-box {
    width: 15px;
    height: 15px;
    border: 1px solid #777;
}

/* page tabs */
.pagebar {
    height: 44px;
    display: flex;
    background-color: #f3f2f1;
}

.pb-views {
    width: 159px;
    position: relative;
    display: flex;
    padding-left: 13px;
    gap: 24px;
    border-right: 1px solid #a19f9d;
}

.pb-view {
    width: 30px;
    height: 38px;
    display: flex;
    align-items: center;
    justify-content: center;
}

.pb-view.current {
    border-bottom: 3px solid #117865;
    border-radius: 1px;
}

.pb-view svg {
    width: 24px;
    height: 20px;
}

.pb-view .pb-phone {
    width: 16px;
    height: 26px;
}

.pb-arrow {
    position: absolute;
    top: 16px;
    border-top: 5px solid transparent;
    border-bottom: 5px solid transparent;
}

.pb-arrow.left {
    left: 117px;
    border-right: 6px solid #c8c6c4;
}

.pb-arrow.right {
    left: 145px;
    border-left: 6px solid #c8c6c4;
}

.pb-tab {
    width: 94px;
    padding-left: 4px;
    text-align: center;
    line-height: 46px;
    background-color: #fff;
    border-bottom: 5px solid #117865;
    font-size: 15px;
}

.pb-add {
    width: 49px;
    margin-left: 1px;
    text-align: center;
    background-color: #117865;
    color: #fff;
    font-size: 26px;
    font-weight: 700;
    line-height: 40px;
}

/* filters pane */
.filters {
    width: 250px;
    flex: none;
    background-color: #fff;
    padding: 0 10px;
}

.f-head {
    height: 50px;
    display: flex;
    align-items: center;
    padding: 0 2px 0 3px;
}

.f-funnel {
    width: 20px;
    height: 20px;
    margin-right: 11px;
}

.pane-title {
    font-size: 19.5px;
    font-weight: 500;
    color: #252423;
}

.f-eye {
    width: 15px;
    height: 12px;
    margin-left: auto;
    margin-right: 22px;
}

.f-dbl {
    width: 15px;
    height: 14px;
    flex: none;
}

.f-search {
    width: 225px;
    height: 41px;
    margin-top: 8px;
    display: flex;
    align-items: center;
    gap: 12px;
    padding-left: 14px;
    border: 1px solid #a19f9d;
    font-size: 16px;
    color: #444;
}

.f-search svg {
    width: 17px;
    height: 17px;
}

.f-sub {
    display: flex;
    justify-content: space-between;
    width: 226px;
    margin-top: 27px;
    height: 20px;
    line-height: 20px;
    font-size: 14.5px;
    color: #3b3a39;
}

.f-sub + .f-drop + .f-sub {
    margin-top: 34px;
}

.dots {
    font-size: 14px;
    letter-spacing: 1px;
}

.f-drop {
    width: 230px;
    height: 53px;
    margin-top: 15px;
    line-height: 51px;
    text-align: center;
    border: 1px solid #d2d0ce;
    border-radius: 2px;
    font-size: 15px;
    color: #252423;
}

.f-drop.second {
    height: 57px;
    margin-top: 11px;
    line-height: 55px;
}

/* visualizations pane */
.viz {
    width: 227px;
    flex: none;
    border-left: 1px solid #e1dfdd;
    border-right: 1px solid #e1dfdd;
}

.pane-head {
    height: 50px;
    display: flex;
    align-items: center;
    justify-content: space-between;
    padding: 0 11px 0 10px;
}

.viz-build {
    height: 16px;
    line-height: 16px;
    margin-left: 10px;
    font-weight: 500;
    font-size: 14.8px;
}

.viz-modes {
    display: flex;
    gap: 42px;
    margin: 6px 0 0 10px;
}

.mode {
    width: 40px;
    height: 40px;
    display: flex;
    align-items: center;
    justify-content: center;
    border-radius: 2px;
}

.mode.on {
    background-color: #d2d0ce;
}

.mode svg {
    width: 30px;
    height: 28px;
}

.viz-line {
    position: relative;
    height: 15px;
    border-bottom: 1px solid #8a8886;
}

.notch {
    position: absolute;
    left: 21px;
    bottom: -6px;
    width: 14px;
    height: 14px;
    background-color: #f3f2f1;
    border-top: 1px solid #8a8886;
    border-left: 1px solid #8a8886;
    transform: rotate(45deg);
}

.viz-grid {
    display: grid;
    grid-template-columns: repeat(6, 23px);
    grid-auto-rows: 23px;
    column-gap: 12px;
    row-gap: 12px;
    margin: 14px 0 0 14px;
}

.viz-grid svg {
    width: 23px;
    height: 23px;
}

.n123 {
    font-size: 10px;
    fill: #2b88d8;
}

.atxt {
    font-size: 13px;
    fill: #2b88d8;
}

.rtxt {
    font-size: 22px;
    font-weight: 700;
    fill: #1a75bb;
}

.pytxt {
    font-size: 22px;
    font-weight: 700;
    fill: #1a75bb;
}

.viz-sep {
    height: 1px;
    margin-top: 11px;
    background-color: #e1dfdd;
}

.v-label {
    margin: 13px 0 0 15px;
    height: 18px;
    line-height: 18px;
    font-size: 14.8px;
    color: #3b3a39;
}

.v-drop {
    width: 213px;
    height: 32px;
    margin: 14px 0 0 5px;
    padding-left: 10px;
    line-height: 30px;
    background-color: #fff;
    border: 1px dashed #c8c6c4;
    font-size: 15.2px;
}

.v-drop.first {
    height: 35px;
    margin-top: 8px;
    padding-left: 14px;
    line-height: 33px;
    font-size: 15px;
}

.v-head {
    margin: 14px 0 0 15px;
    height: 18px;
    line-height: 18px;
    font-size: 14.8px;
    font-weight: 500;
    color: #3b3a39;
}

.v-opt {
    height: 20px;
    margin: 12px 28px 0 15px;
    line-height: 20px;
    display: flex;
    align-items: center;
    justify-content: space-between;
    font-size: 14.8px;
    color: #3b3a39;
}

.v-opt + .v-opt {
    margin-top: 14px;
}

.toggle {
    width: 40px;
    height: 20px;
    display: flex;
    align-items: center;
    justify-content: space-between;
    padding: 0 5px;
    border-radius: 10px;
    font-size: 11px;
}

.toggle i {
    width: 10px;
    height: 10px;
    border-radius: 50%;
}

.toggle.off {
    background-color: #fff;
    border: 1px solid #8a8886;
    color: #8a8886;
}

.toggle.off i {
    background-color: #605e5c;
}

.toggle.on {
    background-color: #117865;
    color: #fff;
}

.toggle.on i {
    background-color: #fff;
}

/* data pane */
.data {
    flex: 1;
    min-width: 0;
}

.data .pane-head {
    padding: 0 10px 0 11px;
}

.d-search {
    width: 214px;
    height: 29px;
    margin: 8px 0 0 6px;
    display: flex;
    align-items: center;
    gap: 9px;
    padding-left: 15px;
    background-color: #fff;
    border: 1px solid #e1dfdd;
    border-bottom-color: #605e5c;
    border-radius: 4px;
    font-size: 16px;
    color: #605e5c;
}

.d-search svg {
    width: 17px;
    height: 17px;
}

.d-body {
    display: flex;
    height: 683px;
    margin-top: 10px;
    overflow: hidden;
}

.tree {
    width: 210px;
    flex: none;
    padding-top: 1.5px;
    font-size: 14.5px;
    color: #3b3a39;
}

.t-head {
    height: 30px;
    display: flex;
    align-items: center;
    padding-left: 17px;
}

.hc {
    width: 8px;
    height: 14px;
    margin: 0 11px 0 2px;
}

.hc.open {
    width: 14px;
    height: 8px;
    margin: 0 7px 0 -2px;
}

.ht {
    width: 15px;
    height: 15px;
    margin-right: 8px;
}

.t-row {
    height: 30px;
    display: grid;
    grid-template-columns: 56px 25px 22px 1fr;
    align-items: center;
    white-space: nowrap;
}

.tc {
    width: 8px;
    height: 14px;
    justify-self: end;
    margin-right: 9px;
}

.cb {
    width: 15px;
    height: 15px;
    border: 1px solid #8a8886;
    border-radius: 2px;
}

.ti {
    width: 14px;
    height: 15px;
}

.scroll {
    width: 10px;
    height: 645px;
    background-color: #8a8886;
}

/* status bar */
.status {
    flex: 1;
    display: flex;
    justify-content: space-between;
    border-top: 1px solid #e1dfdd;
    overflow: hidden;
}

.st-page {
    margin: 7px 0 0 -2px;
    font-size: 15px;
    color: #3b3a39;
}

.zoom {
    display: flex;
    align-items: center;
    height: 30px;
    flex: none;
    color: #605e5c;
}

.z-minus {
    font-size: 18px;
    margin-right: 5px;
}

.z-track {
    position: relative;
    width: 125px;
    height: 1px;
    background-color: #605e5c;
}

.z-thumb {
    position: absolute;
    left: 41px;
    top: -6px;
    width: 5px;
    height: 13px;
    background-color: #605e5c;
}

.z-tick {
    position: absolute;
    left: 62px;
    top: -3px;
    width: 1px;
    height: 7px;
    background-color: #605e5c;
}

.z-plus {
    font-size: 20px;
    margin-left: 6px;
    width: 28px;
}

.z-val {
    font-size: 15px;
    margin: 0 24px 0 0;
}

.z-fit {
    width: 20px;
    height: 14px;
    margin-right: 22px;
}
```
